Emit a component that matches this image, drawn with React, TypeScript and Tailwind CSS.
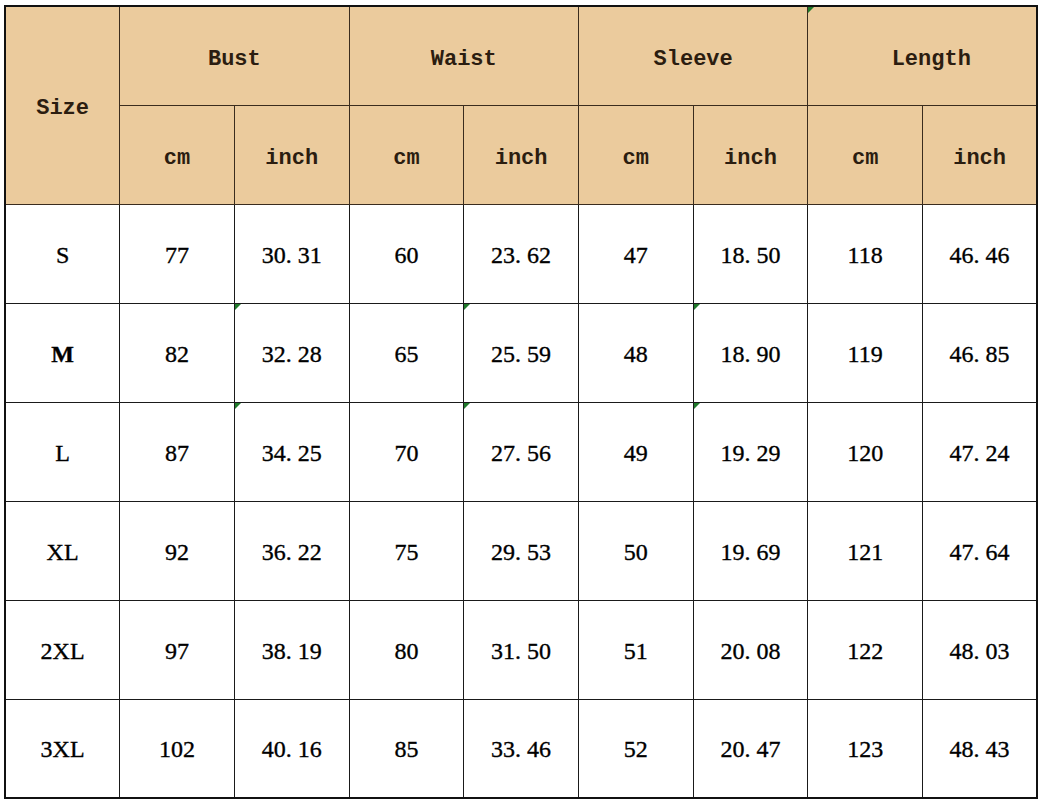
import React from 'react';

const rows = [
  ['S', '77', '30. 31', '60', '23. 62', '47', '18. 50', '118', '46. 46'],
  ['M', '82', '32. 28', '65', '25. 59', '48', '18. 90', '119', '46. 85'],
  ['L', '87', '34. 25', '70', '27. 56', '49', '19. 29', '120', '47. 24'],
  ['XL', '92', '36. 22', '75', '29. 53', '50', '19. 69', '121', '47. 64'],
  ['2XL', '97', '38. 19', '80', '31. 50', '51', '20. 08', '122', '48. 03'],
  ['3XL', '102', '40. 16', '85', '33. 46', '52', '20. 47', '123', '48. 43'],
];

// little green corner marks, as in the spreadsheet export
const marked = (r: number, c: number) => (r === 1 || r === 2) && (c === 2 || c === 4 || c === 6);

const Mark = () => (
  <span className="absolute left-0 top-0 w-0 h-0 border-t-[6px] border-r-[6px] border-t-[#1f7a2a] border-r-transparent" />
);

const head = "border border-[#3a2c1e] bg-[#ebcb9d] text-[#2b1d10] font-bold text-[22px] text-center align-middle pt-[7px]";
const cell = "relative border border-[#1a1a1a] text-center align-middle text-[24px] text-black pt-[2px] [-webkit-text-stroke:0.35px_black]";

export default function App() {
  return (
    <div className="w-[1042px] h-[800px] bg-white pt-[5px] pl-[4px]" style={{ fontFamily: '"Liberation Serif", serif' }}>
      <table className="table-fixed border-collapse border-2 border-[#111] w-[1033px]">
        <colgroup>
          {Array.from({ length: 9 }).map((_, i) => (
            <col key={i} className="w-[114.7px]" />
          ))}
        </colgroup>
        <thead style={{ fontFamily: '"Liberation Mono", monospace' }}>
          <tr className="h-[99px]">
            <th rowSpan={2} className={head}>Size</th>
            <th colSpan={2} className={head}>Bust</th>
            <th colSpan={2} className={head}>Waist</th>
            <th colSpan={2} className={head}>Sleeve</th>
            <th colSpan={2} className={head + " relative pl-[18px]"}>
              <Mark />
              Length
            </th>
          </tr>
          <tr className="h-[99px]">
            {['cm', 'inch', 'cm', 'inch', 'cm', 'inch', 'cm', 'inch'].map((t, i) => (
              <th key={i} className={head}>{t}</th>
            ))}
          </tr>
        </thead>
        <tbody>
          {rows.map((row, r) => (
            <tr key={r} className="h-[99px]">
              {row.map((v, c) => (
                <td key={c} className={cell + (c === 0 && v === 'M' ? ' font-bold' : '')}>
                  {marked(r, c) && <Mark />}
                  {v}
                </td>
              ))}
            </tr>
          ))}
        </tbody>
      </table>
    </div>
  );
}
